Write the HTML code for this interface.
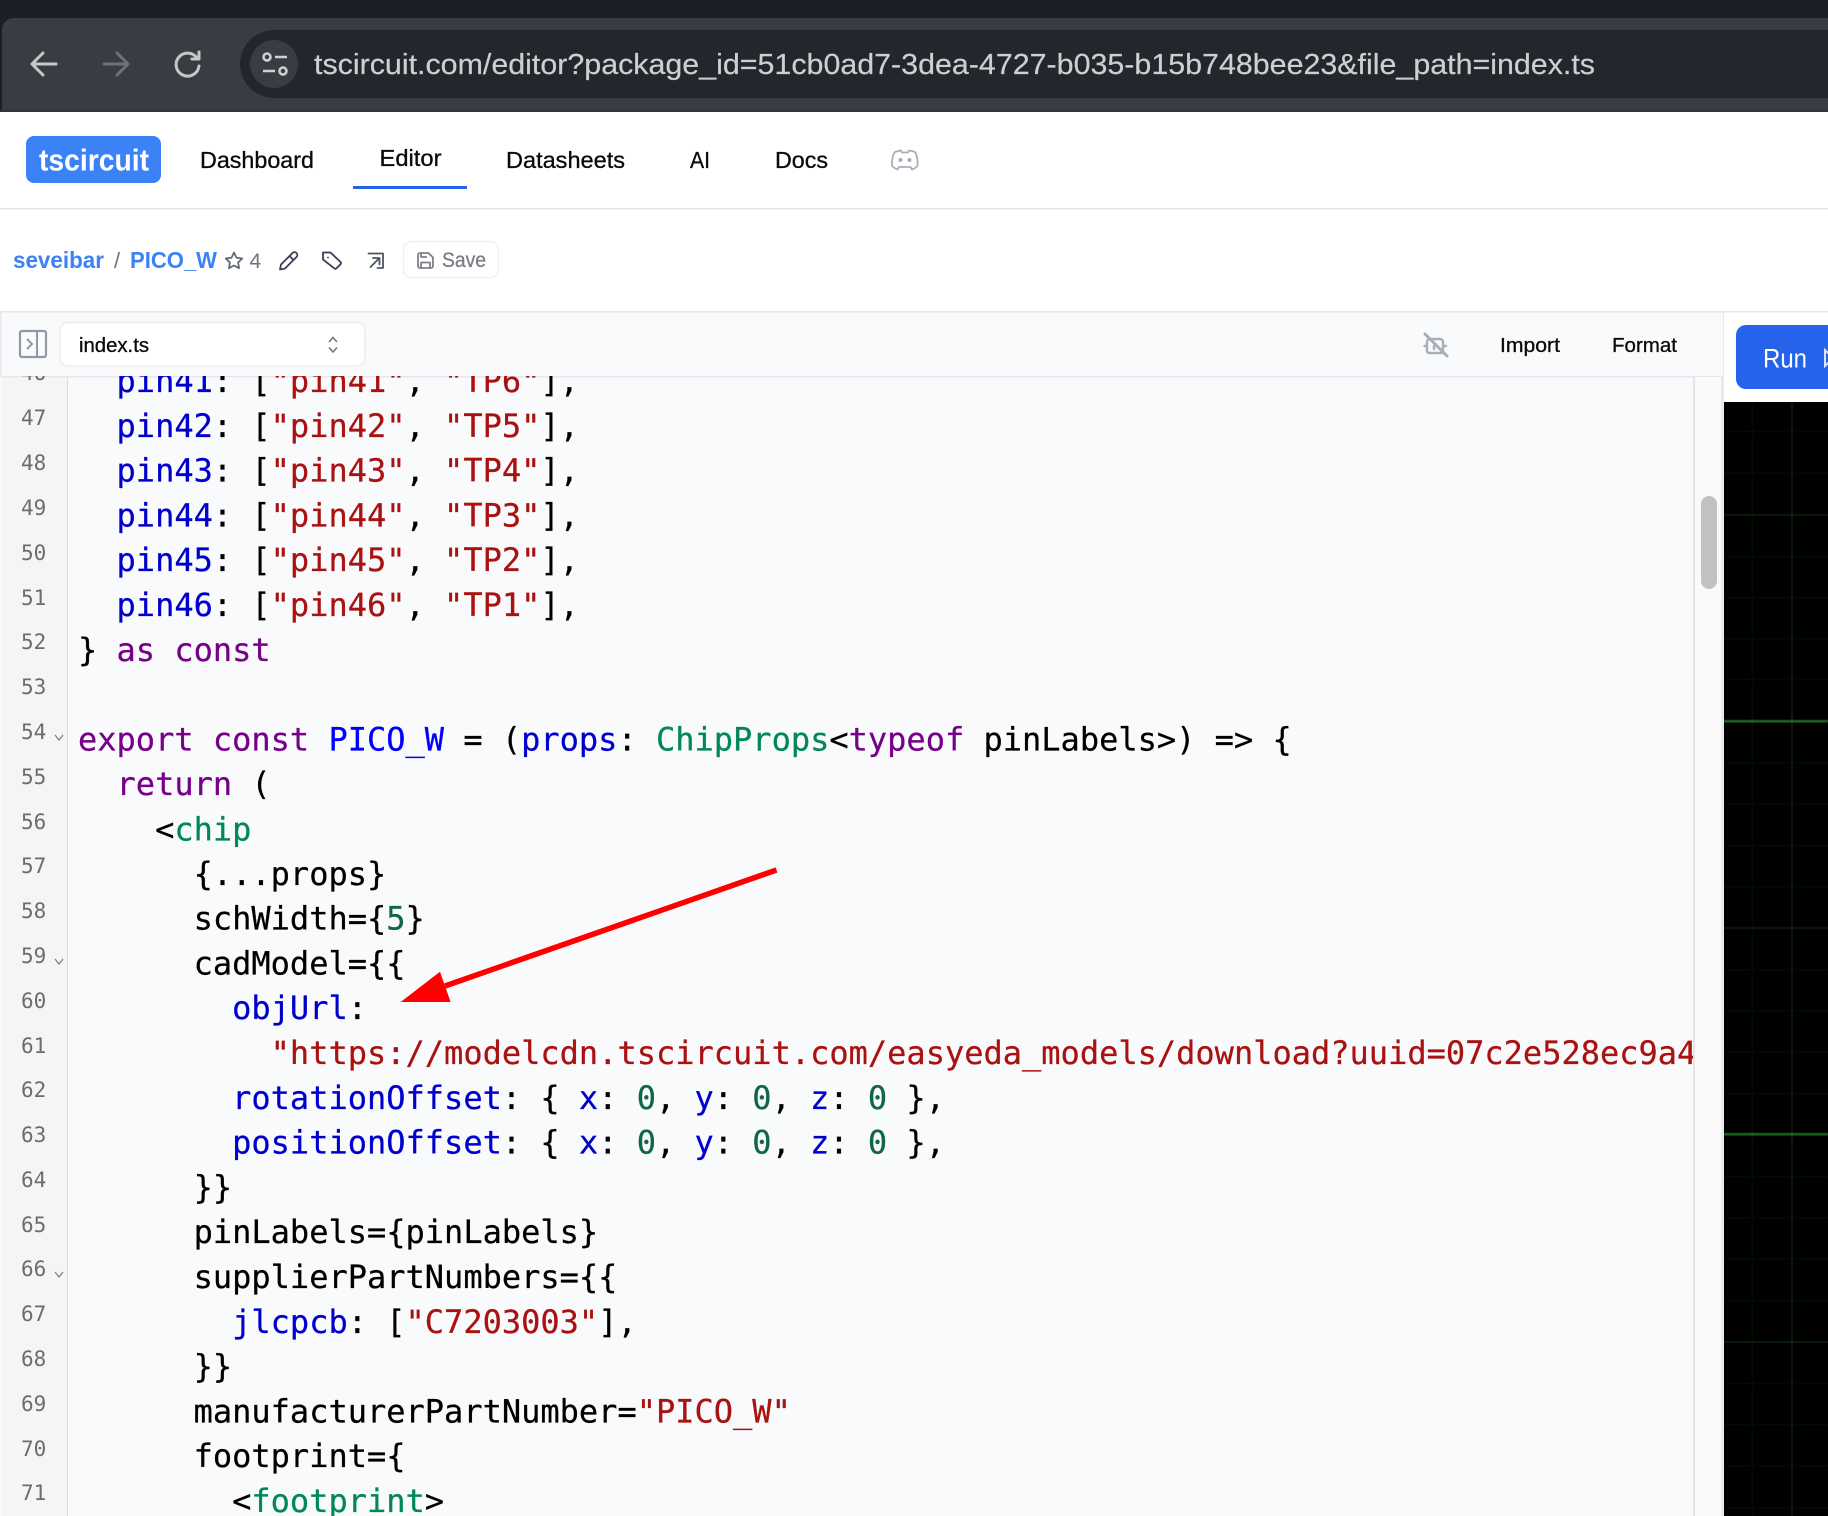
<!DOCTYPE html>
<html lang="en"><head><meta charset="utf-8"><title>tscircuit editor</title>
<style>
html,body{margin:0;padding:0;background:#fff;width:1828px;height:1516px;overflow:hidden}
svg{display:block}
text{white-space:pre}
.s{font-family:"Liberation Sans",sans-serif}
.m{font-family:"DejaVu Sans Mono",monospace;font-size:32px;fill:#000;stroke:#000;stroke-width:.25px}
.n{font-family:"DejaVu Sans Mono",monospace;font-size:21px;fill:#6c6c6c}
.p{fill:#0000cc;stroke:#0000cc}.k{fill:#770088;stroke:#770088}.t{fill:#aa1111;stroke:#aa1111}.g{fill:#008855;stroke:#008855}.d{fill:#116644;stroke:#116644}.f{fill:#0000ff;stroke:#0000ff}
.w{stroke:#0a0a0a;stroke-width:.3px}
</style></head><body>
<svg xmlns="http://www.w3.org/2000/svg" width="1828" height="1516" viewBox="0 0 1828 1516">
<defs>
<clipPath id="c"><rect x="68" y="376" width="1625" height="1140"/></clipPath>
<clipPath id="g"><rect x="0" y="376" width="67" height="1140"/></clipPath>
<clipPath id="p"><rect x="1724" y="402" width="104" height="1114"/></clipPath>
<filter id="b" x="0" y="0" width="100%" height="100%"><feGaussianBlur stdDeviation="0.6"/></filter>
</defs>
<rect width="1828" height="1516" fill="#fff"/>
<!-- browser chrome -->
<rect width="1828" height="18" fill="#1c1f27"/>
<rect y="18" width="1828" height="94" fill="#1c1f27"/>
<path d="M2 112V30a12 12 0 0 1 12-12H1828V112Z" fill="#3a3c44"/>
<rect y="110" width="1828" height="2" fill="#33353c"/>
<path d="M274 30H1828V98H274a34 34 0 0 1 0-68Z" fill="#24262e"/>
<circle cx="274" cy="64" r="24" fill="#3a3c44"/>
<g fill="none" stroke="#c7c7c7" stroke-width="3" stroke-linecap="round" stroke-linejoin="round">
<path d="M56 64H33M43 53 32 64 43 75"/>
<path d="M127 64H104M117 53 128 64 117 75" stroke="#6f7177"/>
<path d="M197 58A11.500 11.500 0 1 0 199 66M199 52V59H192"/>
</g>
<g fill="none" stroke="#d2d2d2" stroke-width="2.500">
<circle cx="267" cy="57" r="3.500"/><path d="M275 57H287M263 71H275"/><circle cx="283" cy="71" r="3.500"/>
</g>
<text class="s" x="314" y="74" font-size="29" fill="#cfcfcf" stroke="#cfcfcf" stroke-width=".2" textLength="1281" lengthAdjust="spacingAndGlyphs">tscircuit.com/editor?package_id=51cb0ad7-3dea-4727-b035-b15b748bee23&amp;file_path=index.ts</text>
<!-- navbar -->
<rect x="26" y="136" width="135" height="47" rx="8" fill="#3b82f6"/>
<text class="s" x="39" y="170.500" font-size="31" font-weight="700" fill="#fff" textLength="110" lengthAdjust="spacingAndGlyphs">tscircuit</text>
<g class="s" font-size="23" fill="#0a0a0a">
<text class="w" x="200" y="168" textLength="114" lengthAdjust="spacingAndGlyphs">Dashboard</text>
<text class="w" x="379.500" y="166" textLength="62" lengthAdjust="spacingAndGlyphs">Editor</text>
<text class="w" x="506" y="168" textLength="119" lengthAdjust="spacingAndGlyphs">Datasheets</text>
<text class="w" x="690" y="168" textLength="20" lengthAdjust="spacingAndGlyphs">AI</text>
<text class="w" x="775" y="168" textLength="53" lengthAdjust="spacingAndGlyphs">Docs</text>
</g>
<rect x="353" y="186" width="114" height="3" fill="#2563eb"/>
<path d="M895 152c3-1 5-1.500 6-1.500l1 2h6l1-2c1 0 3 .5 6 1.500 2 3 3 9 2.500 14-2 2-4 3-5.500 3.500l-1.500-2.500H899l-1.500 2.500c-1.500-.5-3.500-1.500-5.500-3.500-.5-5 .5-11 3-14Z" fill="none" stroke="#a9aeb8" stroke-width="1.800" stroke-linejoin="round"/>
<circle cx="900.500" cy="160" r="2" fill="#a9aeb8"/><circle cx="909.500" cy="160" r="2" fill="#a9aeb8"/>
<rect y="208" width="1828" height="1.500" fill="#e5e7eb"/>
<!-- breadcrumb -->
<text class="s" x="13" y="268" font-size="23" font-weight="700" fill="#3b82f6" textLength="91" lengthAdjust="spacingAndGlyphs">seveibar</text>
<text class="s" x="114" y="268" font-size="22" fill="#6b7280">/</text>
<text class="s" x="130" y="268" font-size="23" font-weight="700" fill="#3b82f6" textLength="87" lengthAdjust="spacingAndGlyphs">PICO_W</text>
<path d="M234 252.500l2.500 5.200 5.700.8-4.100 4 1 5.700-5.100-2.700-5.100 2.700 1-5.700-4.100-4 5.700-.8Z" fill="none" stroke="#5b6472" stroke-width="1.700" stroke-linejoin="round"/>
<text class="s" x="249.500" y="268" font-size="21" fill="#6b7280">4</text>
<g fill="none" stroke="#374151" stroke-width="1.800" stroke-linejoin="round" stroke-linecap="round">
<path d="M292.500 253a2.800 2.800 0 0 1 4 4L285 268.500l-5 1 1-5ZM289.500 256l4 4"/>
<path d="M323 252.500h7.500l10 9.500a1.600 1.600 0 0 1 0 2.300l-4 4a1.600 1.600 0 0 1-2.300 0L323 259.500ZM328 257.500h.01"/>
<path d="M368.500 253.500h14.500v14.500h-5.500M370.500 267l8.500-8.500M373 258h6.500v6.500" stroke="#4b5563"/>
</g>
<rect x="403.500" y="241.500" width="95" height="36" rx="8" fill="#fff" stroke="#f0f1f3" stroke-width="1.500"/>
<g fill="none" stroke="#7d8087" stroke-width="1.800" stroke-linejoin="round"><path d="M418 255a2 2 0 0 1 2-2h8.500l4.500 4.500v8.500a2 2 0 0 1-2 2h-11a2 2 0 0 1-2-2Z"/><path d="M421 268v-5.500h9v5.500M421 253v4h6"/></g>
<text class="s" x="442" y="267" font-size="21" fill="#7a7d84" stroke="#7a7d84" stroke-width=".3" textLength="44" lengthAdjust="spacingAndGlyphs">Save</text>
<!-- editor toolbar -->
<rect x="0" y="311" width="1723" height="65" fill="#f9fafb"/>
<rect x="0" y="311" width="1828" height="1.500" fill="#e5e7eb"/>
<rect x="0" y="311" width="1.500" height="1205" fill="#e5e7eb"/>
<rect x="1723" y="311" width="1" height="91" fill="#e5e7eb"/>
<rect x="20" y="331" width="26" height="26" rx="2" fill="none" stroke="#8f99a8" stroke-width="2.200"/>
<path d="M37 331V357M27 339l5 5-5 5" fill="none" stroke="#8f99a8" stroke-width="2"/>
<rect x="60" y="322.500" width="305" height="43.500" rx="8" fill="#fff" stroke="#eceef1" stroke-width="1.500"/>
<text class="s w" x="79" y="352" font-size="20" fill="#0a0a0a" textLength="70" lengthAdjust="spacingAndGlyphs">index.ts</text>
<path d="M329 342l4-4.500 4 4.500M329 347.500l4 4.500 4-4.500" fill="none" stroke="#6b7280" stroke-width="1.500"/>
<g fill="none" stroke="#a9afb9" stroke-width="2.400" stroke-linejoin="round" stroke-linecap="round">
<path d="M1430 339h10a3 3 0 0 1 3 3v11h-14a2 2 0 0 1-2-2V342a3 3 0 0 1 3-3ZM1424.500 346h2M1443 346h3M1434 346v3"/>
<path d="M1425 334l22 22" stroke-width="3"/>
</g>
<text class="s w" x="1500" y="352" font-size="20.500" fill="#0a0a0a" textLength="60" lengthAdjust="spacingAndGlyphs">Import</text>
<text class="s w" x="1612" y="352" font-size="20.500" fill="#0a0a0a" textLength="65" lengthAdjust="spacingAndGlyphs">Format</text>
<rect x="1736" y="325" width="120" height="64" rx="10" fill="#2563eb"/>
<text class="s" x="1763" y="367.500" font-size="27" fill="#fff" textLength="44" lengthAdjust="spacingAndGlyphs">Run</text>
<path d="M1825 350v16l8-8Z" fill="none" stroke="#dbe6ff" stroke-width="2"/>
<!-- editor body -->
<rect x="0" y="376" width="1693" height="1140" fill="#f9fafb"/>
<rect x="0" y="376" width="1723" height="1.500" fill="#e5e7eb"/>
<rect x="1.500" y="377.500" width="66" height="1139" fill="#f5f5f5"/>
<rect x="67" y="377.500" width="1" height="1139" fill="#dddddd"/>
<rect x="1693" y="377" width="2" height="1139" fill="#e5e5e5"/>
<rect x="1695" y="377" width="26" height="1139" fill="#fafafa"/>
<rect x="1721" y="377" width="3" height="1139" fill="#ebebeb"/>
<rect x="1701" y="496" width="16" height="93" rx="8" fill="#c1c1c1"/>
<!-- schematic panel -->
<rect x="1724" y="402" width="104" height="1114" fill="#000"/>
<g clip-path="url(#p)"><g fill="#060c06" filter="url(#b)">
<rect x="1751.500" y="402" width="2" height="1114" fill="#050c05"/>
<rect x="1791" y="402" width="2" height="1114" fill="#081c08"/>
<rect x="1724" y="431" width="104" height="1.500"/><rect x="1724" y="472.500" width="104" height="1.500"/><rect x="1724" y="556" width="104" height="1.500"/><rect x="1724" y="597" width="104" height="1.500"/><rect x="1724" y="638" width="104" height="1.500"/><rect x="1724" y="679" width="104" height="1.500"/><rect x="1724" y="762" width="104" height="1.500"/><rect x="1724" y="803" width="104" height="1.500"/><rect x="1724" y="845" width="104" height="1.500"/><rect x="1724" y="886" width="104" height="1.500"/><rect x="1724" y="969" width="104" height="1.500"/><rect x="1724" y="1010" width="104" height="1.500"/><rect x="1724" y="1051" width="104" height="1.500"/><rect x="1724" y="1093" width="104" height="1.500"/><rect x="1724" y="1176" width="104" height="1.500"/><rect x="1724" y="1217" width="104" height="1.500"/><rect x="1724" y="1258" width="104" height="1.500"/><rect x="1724" y="1300" width="104" height="1.500"/><rect x="1724" y="1383" width="104" height="1.500"/><rect x="1724" y="1424" width="104" height="1.500"/><rect x="1724" y="1465" width="104" height="1.500"/><rect x="1724" y="1507" width="104" height="1.500"/>
<rect x="1724" y="514" width="104" height="2" fill="#0b1e0b"/><rect x="1724" y="927" width="104" height="2" fill="#0b1e0b"/><rect x="1724" y="1341" width="104" height="2" fill="#0b1e0b"/>
<rect x="1724" y="720" width="104" height="2.500" fill="#226622"/><rect x="1724" y="1133" width="104" height="2.500" fill="#226622"/>
</g></g>
<!-- line numbers -->
<g clip-path="url(#g)">
<text class="n" x="21" y="380.200">46</text>
<text class="n" x="21" y="425">47</text><text class="n" x="21" y="470">48</text><text class="n" x="21" y="515">49</text><text class="n" x="21" y="560">50</text><text class="n" x="21" y="605">51</text><text class="n" x="21" y="649">52</text><text class="n" x="21" y="694">53</text><text class="n" x="21" y="739">54</text><text class="n" x="21" y="784">55</text><text class="n" x="21" y="829">56</text><text class="n" x="21" y="873">57</text><text class="n" x="21" y="918">58</text><text class="n" x="21" y="963">59</text><text class="n" x="21" y="1008">60</text><text class="n" x="21" y="1053">61</text><text class="n" x="21" y="1097">62</text><text class="n" x="21" y="1142">63</text><text class="n" x="21" y="1187">64</text><text class="n" x="21" y="1232">65</text><text class="n" x="21" y="1276">66</text><text class="n" x="21" y="1321">67</text><text class="n" x="21" y="1366">68</text><text class="n" x="21" y="1411">69</text><text class="n" x="21" y="1456">70</text><text class="n" x="21" y="1500">71</text>
<path d="M55 735l4 5 4-5M55 959l4 5 4-5M55 1272l4 5 4-5" fill="none" stroke="#808080" stroke-width="1.300"/>
</g>
<!-- code -->
<g clip-path="url(#c)">
<text class="m" x="78" y="392">  <tspan class="p">pin41</tspan>: [<tspan class="t">"pin41"</tspan>, <tspan class="t">"TP6"</tspan>],</text>
<text class="m" x="78" y="436.800">  <tspan class="p">pin42</tspan>: [<tspan class="t">"pin42"</tspan>, <tspan class="t">"TP5"</tspan>],</text>
<text class="m" x="78" y="481.600">  <tspan class="p">pin43</tspan>: [<tspan class="t">"pin43"</tspan>, <tspan class="t">"TP4"</tspan>],</text>
<text class="m" x="78" y="526.400">  <tspan class="p">pin44</tspan>: [<tspan class="t">"pin44"</tspan>, <tspan class="t">"TP3"</tspan>],</text>
<text class="m" x="78" y="571.200">  <tspan class="p">pin45</tspan>: [<tspan class="t">"pin45"</tspan>, <tspan class="t">"TP2"</tspan>],</text>
<text class="m" x="78" y="616">  <tspan class="p">pin46</tspan>: [<tspan class="t">"pin46"</tspan>, <tspan class="t">"TP1"</tspan>],</text>
<text class="m" x="78" y="660.800">} <tspan class="k">as</tspan> <tspan class="k">const</tspan></text>
<text class="m" x="78" y="750.400"><tspan class="k">export</tspan> <tspan class="k">const</tspan> <tspan class="f">PICO_W</tspan> = (<tspan class="p">props</tspan>: <tspan class="g">ChipProps</tspan>&lt;<tspan class="k">typeof</tspan> pinLabels&gt;) =&gt; {</text>
<text class="m" x="78" y="795.200">  <tspan class="k">return</tspan> (</text>
<text class="m" x="78" y="840.500">    &lt;<tspan class="g">chip</tspan></text>
<text class="m" x="78" y="884.800">      {...props}</text>
<text class="m" x="78" y="929.600">      schWidth={<tspan class="d">5</tspan>}</text>
<text class="m" x="78" y="974.400">      cadModel={{</text>
<text class="m" x="78" y="1019.200">        <tspan class="p">objUrl</tspan>:</text>
<text class="m t" x="78" y="1064.200">          "https://modelcdn.tscircuit.com/easyeda_models/download?uuid=07c2e528ec9a4</text>
<text class="m" x="78" y="1108.800">        <tspan class="p">rotationOffset</tspan>: { <tspan class="p">x</tspan>: <tspan class="d">0</tspan>, <tspan class="p">y</tspan>: <tspan class="d">0</tspan>, <tspan class="p">z</tspan>: <tspan class="d">0</tspan> },</text>
<text class="m" x="78" y="1153.600">        <tspan class="p">positionOffset</tspan>: { <tspan class="p">x</tspan>: <tspan class="d">0</tspan>, <tspan class="p">y</tspan>: <tspan class="d">0</tspan>, <tspan class="p">z</tspan>: <tspan class="d">0</tspan> },</text>
<text class="m" x="78" y="1198.400">      }}</text>
<text class="m" x="78" y="1243.200">      pinLabels={pinLabels}</text>
<text class="m" x="78" y="1288">      supplierPartNumbers={{</text>
<text class="m" x="78" y="1332.800">        <tspan class="p">jlcpcb</tspan>: [<tspan class="t">"C7203003"</tspan>],</text>
<text class="m" x="78" y="1377.600">      }}</text>
<text class="m" x="78" y="1422.400">      manufacturerPartNumber=<tspan class="t">"PICO_W"</tspan></text>
<text class="m" x="78" y="1467.200">      footprint={</text>
<text class="m" x="78" y="1512">        &lt;<tspan class="g">footprint</tspan>&gt;</text>
</g>
<!-- annotation arrow -->
<path d="M776.500 870 445 986" stroke="#ff0000" stroke-width="5.500" fill="none"/>
<path d="M400.700 1002 440 971.700 450.600 1002Z" fill="#ff0000"/>
</svg>
</body></html>
